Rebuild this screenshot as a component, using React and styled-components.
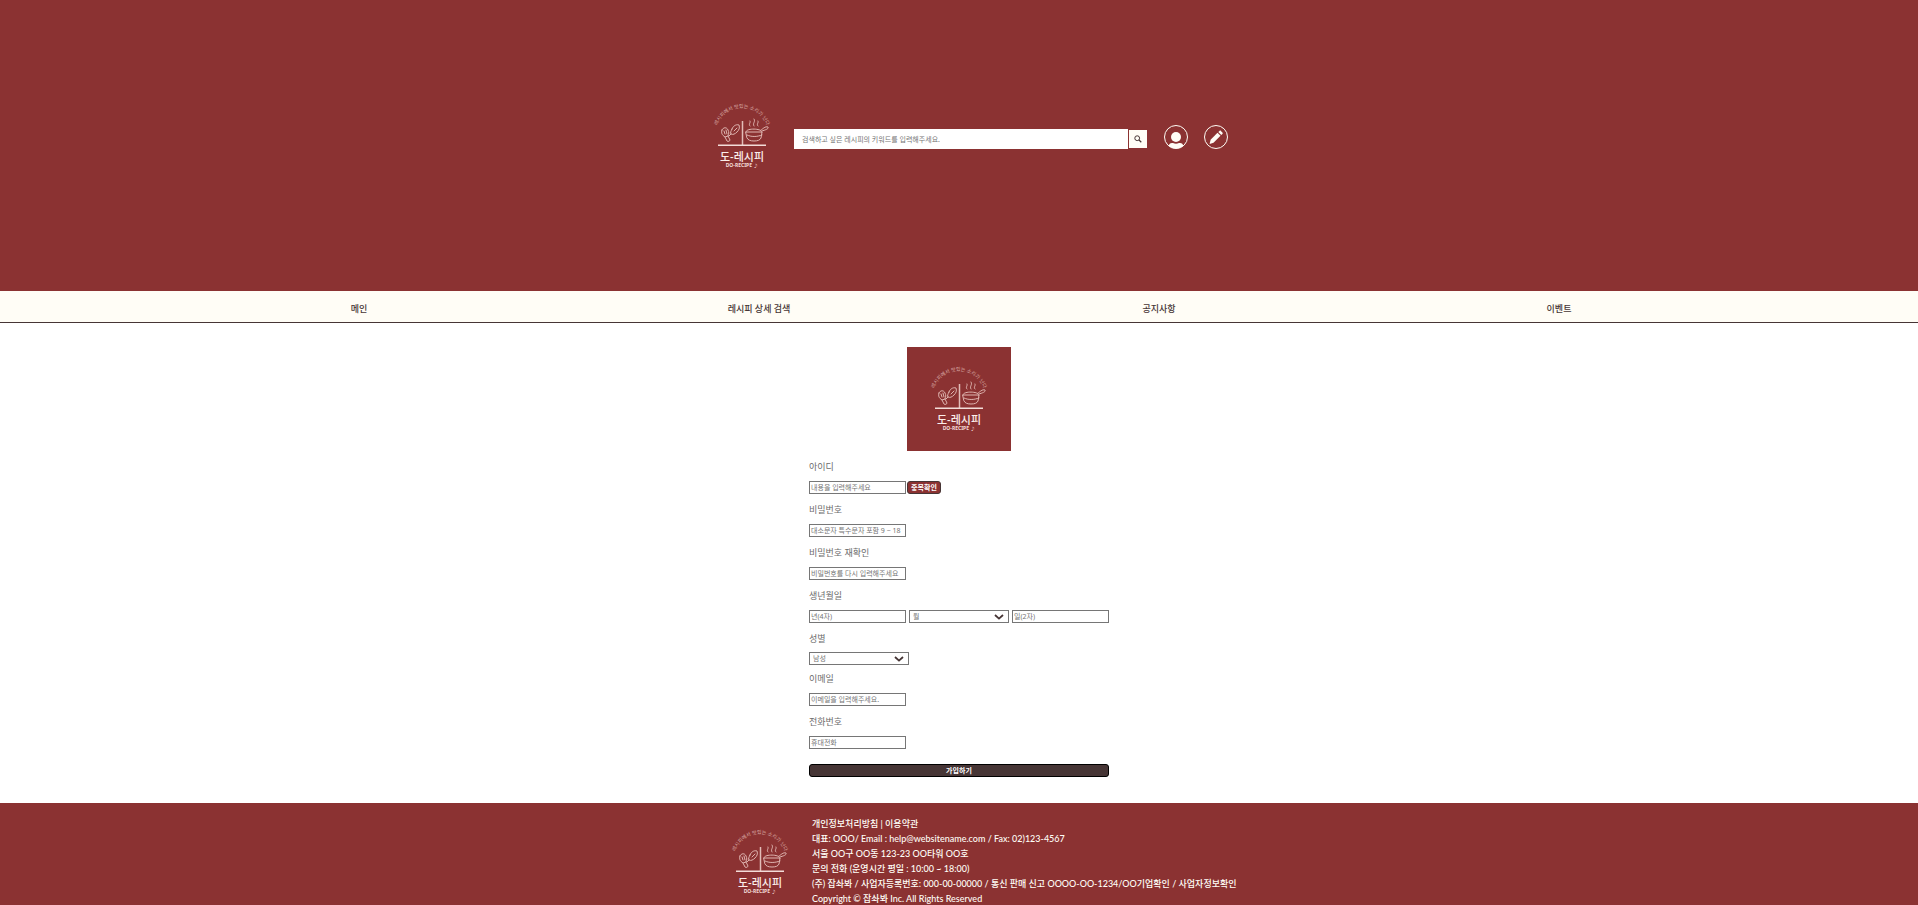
import React from "react";
import styled, { createGlobalStyle } from "styled-components";

const BRAND = "#8b3232";
const CREAM = "#fffdf6";
const COCOA = "#463535";

const GlobalStyle = createGlobalStyle`
  * { box-sizing: border-box; }
  body {
    margin: 0;
    background: #fff;
    color: ${COCOA};
    font-family: "Noto Sans", "Noto Sans CJK KR", sans-serif;
    font-size: 9px;
    line-height: 14px;
  }
  button, input, select { font-family: inherit; }
`;

const Header = styled.header`
  display: flex;
  justify-content: center;
  align-items: center;
  padding: 84px 0 103px;
  background: ${BRAND};
`;

const LogoArt = styled.svg`
  display: block;
  flex: none;
  width: 104px;
  height: 104px;
  background: ${BRAND};
`;

const SearchForm = styled.form`
  display: flex;
  align-items: center;
  gap: 1px;
  padding-top: 6px;
`;

const SearchInput = styled.input`
  width: 334px;
  height: 20px;
  padding: 0 8px;
  border: 0;
  background: #fff;
  font-size: 7px;
  &::placeholder { color: #757575; }
`;

const SearchButton = styled.button`
  display: grid;
  place-items: center;
  width: 18px;
  height: 18px;
  padding: 0;
  border: 0;
  background: ${CREAM};
  color: ${COCOA};
`;

const Shortcuts = styled.div`
  display: flex;
  gap: 16px;
  margin-left: 17px;
  padding-top: 2px;
`;

const ShortcutLink = styled.a`
  display: block;
  width: 24px;
  height: 24px;
  svg { display: block; }
`;

const Nav = styled.nav`
  border-bottom: 1px solid ${COCOA};
  background: ${CREAM};
`;

const NavList = styled.ul`
  display: grid;
  grid-template-columns: repeat(4, 1fr);
  max-width: 1600px;
  margin: 0 auto;
  padding: 11px 0 6px;
  list-style: none;
  text-align: center;
`;

const NavLink = styled.a`
  color: ${COCOA};
  font-weight: 500;
  text-decoration: none;
`;

const Main = styled.main`
  display: flex;
  flex-direction: column;
  align-items: center;
  padding: 24px 0 26px;
`;

const SignupForm = styled.form`
  width: 300px;
  padding-top: 9px;
`;

const Field = styled.div`
  display: flex;
  flex-direction: column;
  gap: ${(p) => (p.$tight ? 6 : 7)}px;
  margin-bottom: ${(p) => (p.$tight ? 7 : 9)}px;
`;

const Label = styled.label`
  color: #6c6c6c;
`;

const Controls = styled.div`
  display: flex;
  justify-content: ${(p) => (p.$spread ? "space-between" : "flex-start")};
  gap: 1px;
`;

const TextInput = styled.input`
  width: 97px;
  height: 13px;
  padding: 0 1px;
  border: 1px solid #767676;
  border-radius: 0;
  background: #fff;
  font-size: 7px;
  &::placeholder { color: #757575; }
`;

const SelectBox = styled.div`
  display: grid;
  width: 100px;
  height: 13px;
  align-items: center;
  > * { grid-area: 1 / 1; }
  > svg {
    justify-self: end;
    margin-right: 5px;
    pointer-events: none;
  }
`;

const Select = styled.select`
  appearance: none;
  width: 100%;
  height: 13px;
  padding: 0 3px;
  border: 1px solid #767676;
  border-radius: 0;
  background: #fff;
  color: #757575;
  font-size: 7px;
  line-height: 11px;
`;

const CheckButton = styled.button`
  width: 34px;
  height: 13px;
  padding: 0;
  border: 1px solid ${COCOA};
  border-radius: 3px;
  background: ${BRAND};
  color: #fff;
  font-size: 7px;
  font-weight: 700;
  line-height: 11px;
  white-space: nowrap;
`;

const SubmitButton = styled.button`
  display: block;
  width: 100%;
  height: 13px;
  margin-top: 15px;
  padding: 0;
  border: 1px solid #000;
  border-radius: 3px;
  background: ${COCOA};
  color: #fff;
  font-size: 7px;
  font-weight: 700;
  line-height: 11px;
`;

const Footer = styled.footer`
  display: flex;
  justify-content: center;
  align-items: flex-start;
  padding-top: 7px;
  background: ${BRAND};
`;

const FooterText = styled.address`
  width: 398px;
  padding-top: 6px;
  color: ${CREAM};
  font-family: Lato, "Noto Sans CJK KR", sans-serif;
  font-style: normal;
  font-weight: 500;
  line-height: 15px;
  white-space: nowrap;
  p { margin: 0; }
  a { color: inherit; text-decoration: none; }
`;

const SloganText = styled.text`
  fill: #d9a9a4;
  font-size: 5px;
`;

const LogoName = styled.text`
  fill: #fbeeea;
  font-size: 11px;
  font-weight: 500;
  text-anchor: middle;
`;

const LogoCaption = styled.text`
  fill: #f3dcd8;
  font-size: 5px;
  font-weight: 700;
  text-anchor: middle;
`;

function Logo({ id }) {
  return (
    <LogoArt viewBox="0 0 104 104" role="img" aria-label="도-레시피">
      <path id={id} d="M26 50 A26 26 0 0 1 78 50" fill="none" />
      <SloganText>
        <textPath href={`#${id}`} startOffset="50%" textAnchor="middle">
          레시피에서 맛있는 소리가 난다
        </textPath>
      </SloganText>
      <g fill="none" stroke="#dfb5b0" strokeWidth="1" strokeLinecap="round" strokeLinejoin="round">
        <path d="M32 46c1-3 5-3 6 0 1 2 1 4 0 6l-3 1c-3-2-4-4-3-7z" />
        <path d="M34 47l1 3M36 46l1 4M35 53l2 4c1 1 3 0 3-1l-2-4" />
        <path d="M42 45c1-3 4-5 7-4 1 3 0 5-2 7s-4 3-6 2c-1-1 0-3 1-5z" />
        <path d="M44 47l3-3M41 50l-2 2" />
        <path d="M56 48h16l-1 6c-1 2-3 3-7 3s-6-1-7-3z" />
        <path d="M56 48c-1-4 16-4 16 0M57 51c4 2 10 2 15 0M71 46c2-1 4-4 7-3 1 2-3 3-6 4" />
        <path d="M60 42c-2-2 1-3 0-5M64 42c-2-3 2-4 0-7M68 42c-2-2 1-3 0-5" />
      </g>
      <path d="M52.500 37v24" stroke="#e2bdb8" strokeWidth="1.500" />
      <path d="M28 61.200h48" stroke="#f3dcd8" strokeWidth="1.500" />
      <LogoName x="52" y="77">도-레시피</LogoName>
      <LogoCaption x="52" y="83">DO-RECIPE ♪</LogoCaption>
    </LogoArt>
  );
}

function SearchIcon() {
  return (
    <svg width="8" height="8" viewBox="0 0 8 8" fill="none" stroke="currentColor" aria-hidden="true">
      <circle cx="3.200" cy="3.200" r="2.400" strokeWidth="1" />
      <path d="M5 5l2.300 2.200" strokeWidth="1.200" />
    </svg>
  );
}

function UserIcon() {
  return (
    <svg width="24" height="24" viewBox="0 0 24 24" aria-hidden="true">
      <clipPath id="user-ring"><circle cx="12" cy="12" r="11.500" /></clipPath>
      <circle cx="12" cy="12" r="11.500" fill="none" stroke={CREAM} />
      <g fill={CREAM} clipPath="url(#user-ring)">
        <circle cx="12" cy="12" r="5" />
        <path d="M5 24v-3.500c0-1.500 1-2.500 3-2.500h1c2 1 4 1 6 0h1c2 0 3 1 3 2.500V24z" />
      </g>
    </svg>
  );
}

function PencilIcon() {
  return (
    <svg width="24" height="24" viewBox="0 0 24 24" aria-hidden="true">
      <circle cx="12" cy="12" r="11.500" fill="none" stroke={CREAM} />
      <g fill={CREAM}>
        <path d="M13.500 7.800l3 3-7 7L5.600 19l1-4.300z" />
        <path d="M14.300 7l1.200-1.100c.5-.4 1-.4 1.400 0l1.500 1.500c.5.500.5 1 0 1.500L17.300 10z" />
      </g>
    </svg>
  );
}

function Chevron() {
  return (
    <svg width="10" height="6" viewBox="0 0 10 6" fill="none" aria-hidden="true">
      <path d="M1 1l4 3.600L9 1" stroke={COCOA} strokeWidth="1.800" />
    </svg>
  );
}

function TextField({ id, label, placeholder, type = "text", children }) {
  return (
    <Field>
      <Label htmlFor={id}>{label}</Label>
      <Controls>
        <TextInput id={id} type={type} placeholder={placeholder} />
        {children}
      </Controls>
    </Field>
  );
}

const NAV_ITEMS = ["메인", "레시피 상세 검색", "공지사항", "이벤트"];
const MONTHS = Array.from({ length: 12 }, (_, i) => `${i + 1}`);

export default function App() {
  return (
    <>
      <GlobalStyle />
      <Header>
        <Logo id="slogan-header" />
        <SearchForm role="search">
          <SearchInput
            type="search"
            aria-label="레시피 검색"
            placeholder="검색하고 싶은 레시피의 키워드를 입력해주세요."
          />
          <SearchButton type="submit" aria-label="검색"><SearchIcon /></SearchButton>
        </SearchForm>
        <Shortcuts>
          <ShortcutLink href="#profile" aria-label="내 정보"><UserIcon /></ShortcutLink>
          <ShortcutLink href="#write" aria-label="글쓰기"><PencilIcon /></ShortcutLink>
        </Shortcuts>
      </Header>
      <Nav>
        <NavList>
          {NAV_ITEMS.map((item) => (
            <li key={item}><NavLink href="#">{item}</NavLink></li>
          ))}
        </NavList>
      </Nav>
      <Main>
        <Logo id="slogan-main" />
        <SignupForm>
          <TextField id="user-id" label="아이디" placeholder="내용을 입력해주세요">
            <CheckButton type="button">중복확인</CheckButton>
          </TextField>
          <TextField id="password" type="password" label="비밀번호" placeholder="대소문자 특수문자 포함 9 ~ 18" />
          <TextField id="password-check" type="password" label="비밀번호 재확인" placeholder="비밀번호를 다시 입력해주세요" />
          <Field>
            <Label htmlFor="birth-year">생년월일</Label>
            <Controls $spread>
              <TextInput id="birth-year" placeholder="년(4자)" />
              <SelectBox>
                <Select aria-label="월" defaultValue="">
                  <option value="">월</option>
                  {MONTHS.map((m) => <option key={m}>{m}</option>)}
                </Select>
                <Chevron />
              </SelectBox>
              <TextInput aria-label="일" placeholder="일(2자)" />
            </Controls>
          </Field>
          <Field $tight>
            <Label htmlFor="gender">성별</Label>
            <SelectBox>
              <Select id="gender">
                <option>남성</option>
                <option>여성</option>
              </Select>
              <Chevron />
            </SelectBox>
          </Field>
          <TextField id="email" type="email" label="이메일" placeholder="이메일을 입력해주세요." />
          <TextField id="phone" type="tel" label="전화번호" placeholder="휴대전화" />
          <SubmitButton type="submit">가입하기</SubmitButton>
        </SignupForm>
      </Main>
      <Footer>
        <Logo id="slogan-footer" />
        <FooterText>
          <p><a href="#privacy">개인정보처리방침</a> | <a href="#terms">이용약관</a></p>
          <p>대표: OOO/ Email : help@websitename.com / Fax: 02)123-4567</p>
          <p>서울 OO구 OO동 123-23 OO타워 OO호</p>
          <p>문의 전화 (운영시간 평일 : 10:00 ~ 18:00)</p>
          <p>(주) 잡솨봐 / 사업자등록번호: 000-00-00000 / 통신 판매 신고 OOOO-OO-1234/OO기업확인 / 사업자정보확인</p>
          <p>Copyright © 잡솨봐 Inc. All Rights Reserved</p>
        </FooterText>
      </Footer>
    </>
  );
}
